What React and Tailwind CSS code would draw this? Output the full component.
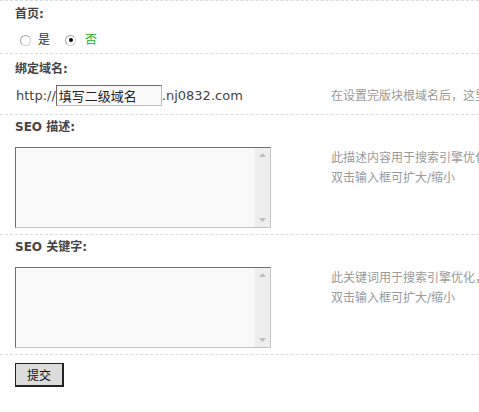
import React from "react";

const Label = ({ children }) => (
  <div className="h-5 leading-5 text-[12px] font-bold text-[#444] whitespace-nowrap">{children}</div>
);

const Tip = ({ children }) => (
  <div className="text-[12px] leading-5 text-[#9a9a9a] whitespace-nowrap">{children}</div>
);

const Radio = ({ checked }) => (
  <span className="relative inline-flex w-[11px] h-[11px] rounded-full border border-[#a0a0a0] border-b-[#d0d0d0] border-r-[#d0d0d0] bg-white items-center justify-center">
    {checked && <span className="w-[4px] h-[4px] rounded-full bg-black" />}
  </span>
);

const FakeTextarea = () => (
  <div className="flex w-[256px] h-[81px] border border-t-[#707070] border-l-[#707070] border-r-[#c4c4c4] border-b-[#c4c4c4] bg-[#f9f9f9]">
    <textarea className="flex-1 min-w-0 resize-none bg-transparent outline-none overflow-hidden p-1 text-[12px]" />
    <div className="w-[16px] shrink-0 flex flex-col justify-between items-center bg-[#eeeeee] border-l border-[#f4f4f4] pt-[5px] pb-[5px]">
      <svg width="7" height="4" viewBox="0 0 7 4">
        <path d="M3.5 0 L7 4 L0 4 Z" fill="#bdbdbd" />
      </svg>
      <svg width="7" height="4" viewBox="0 0 7 4">
        <path d="M0 0 L7 0 L3.5 4 Z" fill="#bdbdbd" />
      </svg>
    </div>
  </div>
);

export default function App() {
  return (
    <div className="w-[479px] h-[412px] overflow-hidden bg-white font-['DejaVu_Sans','Noto_Sans_CJK_SC',sans-serif] text-[#333]">
      {/* 首页 */}
      <div className="border-t border-dashed border-[#d6dde2] pl-[15px] pt-[3px] h-[53px]">
        <Label>首页:</Label>
        <div className="mt-[6px] h-5 flex items-center text-[12px]">
          <span className="ml-[5px] flex"><Radio /></span>
          <span className="ml-[7px] text-[#333]">是</span>
          <span className="ml-[15px] flex"><Radio checked /></span>
          <span className="ml-[9px] text-[#22b022]">否</span>
        </div>
      </div>

      {/* 绑定域名 */}
      <div className="border-t border-dashed border-[#d6dde2] pl-[15px] pt-[5px] h-[61px] overflow-hidden">
        <Label>绑定域名:</Label>
        <div className="mt-[6px] flex">
          <div className="w-[316px] shrink-0 flex items-center text-[13px] text-[#444]">
            <span className="ml-[1px]">http://</span>
            <input
              defaultValue="填写二级域名"
              className="w-[106px] h-[21px] border border-t-[#6a6a6a] border-l-[#6a6a6a] border-r-[#bdbdbd] border-b-[#bdbdbd] bg-[#fafafa] px-[2px] text-[13px] text-[#222] outline-none font-['DejaVu_Sans','Noto_Sans_CJK_SC',sans-serif]"
            />
            <span>.nj0832.com</span>
          </div>
          <div className="flex items-center min-w-0">
            <Tip>在设置完版块根域名后，这里</Tip>
          </div>
        </div>
      </div>

      {/* SEO 描述 */}
      <div className="border-t border-dashed border-[#d6dde2] pl-[15px] pt-[2px] h-[120px] overflow-hidden">
        <Label>SEO 描述:</Label>
        <div className="mt-[10px] flex">
          <div className="w-[316px] shrink-0">
            <FakeTextarea />
          </div>
          <div className="pt-[1px] min-w-0">
            <Tip>此描述内容用于搜索引擎优化</Tip>
            <Tip>双击输入框可扩大/缩小</Tip>
          </div>
        </div>
      </div>

      {/* SEO 关键字 */}
      <div className="border-t border-dashed border-[#d6dde2] pl-[15px] pt-[2px] h-[120px] overflow-hidden">
        <Label>SEO 关键字:</Label>
        <div className="mt-[10px] flex">
          <div className="w-[316px] shrink-0">
            <FakeTextarea />
          </div>
          <div className="pt-[1px] min-w-0">
            <Tip>此关键词用于搜索引擎优化，</Tip>
            <Tip>双击输入框可扩大/缩小</Tip>
          </div>
        </div>
      </div>

      {/* 提交 */}
      <div className="border-t border-dashed border-[#d6dde2] pl-[15px] pt-[8px]">
        <button className="w-[49px] h-[24px] bg-[#dcdcdc] border border-[#222] border-r-2 border-b-2 text-[12px] text-[#111] leading-none flex items-center justify-center font-['Noto_Sans_CJK_SC',sans-serif]">
          提交
        </button>
      </div>
    </div>
  );
}
